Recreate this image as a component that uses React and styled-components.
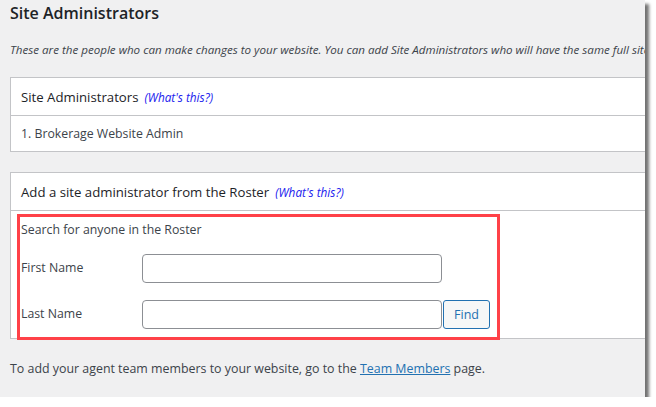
import React from 'react';
import styled, { createGlobalStyle } from 'styled-components';

const GlobalStyle = createGlobalStyle`
    html, body {
        margin: 0;
        padding: 0;
        background: #ffffff;
    }

    body {
        font-family: 'Open Sans', 'Noto Sans', sans-serif;
        color: #3c434a;
    }
`;

const Frame = styled.div`
    width: 645px;
    height: 397px;
    overflow: hidden;
    background: #f0f0f1;
    box-shadow: 4px 4px 3px rgba(0, 0, 0, 0.55);
`;

const Page = styled.div`
    width: 760px;
    padding-left: 10px;
`;

const Title = styled.h1`
    margin: 0;
    height: 28px;
    line-height: 27px;
    font-size: 16px;
    font-weight: 600;
    color: #1d2327;
`;

const Intro = styled.p`
    margin: 12px 0 0;
    height: 18px;
    line-height: 19px;
    font-size: 11.6px;
    font-style: italic;
    white-space: nowrap;
`;

const Box = styled.section`
    margin-top: ${props => props.gap}px;
    background: #ffffff;
    border: 1px solid #c3c4c7;
`;

const BoxHead = styled.div`
    height: 37px;
    display: flex;
    align-items: center;
    gap: 6px;
    padding-left: 10px;
    font-size: 13.2px;
    color: #1d2327;
    border-bottom: 1px solid #c3c4c7;
`;

const Help = styled.a`
    font-size: 11.8px;
    font-style: italic;
    color: #1a1aee;
    text-decoration: none;
`;

const Row = styled.div`
    height: 35px;
    display: flex;
    align-items: center;
    padding-left: 10px;
    font-size: 12.3px;
`;

const Roster = styled.form`
    width: 476px;
    margin: 3px 0 -2px 6px;
    padding: 3px 0 8px 1px;
    border: 3px solid #ff4148;
`;

const Lead = styled.div`
    height: 20px;
    line-height: 20px;
    font-size: 12.3px;
`;

const Field = styled.div`
    display: flex;
    align-items: center;
    margin-top: ${props => (props.first ? 14 : 17)}px;
`;

const Label = styled.label`
    width: 121px;
    font-size: 12.3px;
    padding-bottom: 2px;
`;

const Input = styled.input`
    box-sizing: border-box;
    width: 300px;
    height: 29px;
    margin: 0;
    border: 1px solid #8c8f94;
    border-radius: 4px;
    background: #ffffff;
`;

const Find = styled.button`
    box-sizing: border-box;
    height: 29px;
    width: 47px;
    margin-left: 1px;
    padding: 0;
    border: 1px solid #2271b1;
    border-radius: 3px;
    background: #f6f7f7;
    color: #2271b1;
    font-family: inherit;
    font-size: 12.5px;
`;

const Note = styled.p`
    margin: 20px 0 0;
    height: 20px;
    line-height: 20px;
    font-size: 12.4px;

    a {
        color: #2271b1;
        text-decoration: underline;
    }
`;

const App = () => (
    <Frame>
        <GlobalStyle />
        <Page>
            <Title>Site Administrators</Title>
            <Intro>
                These are the people who can make changes to your website. You can add Site
                Administrators who will have the same full site access as you.
            </Intro>
            <Box gap={19}>
                <BoxHead>
                    Site Administrators <Help href="#">(What's this?)</Help>
                </BoxHead>
                <Row>1. Brokerage Website Admin</Row>
            </Box>
            <Box gap={20}>
                <BoxHead>
                    Add a site administrator from the Roster <Help href="#">(What's this?)</Help>
                </BoxHead>
                <Roster onSubmit={e => e.preventDefault()}>
                    <Lead>Search for anyone in the Roster</Lead>
                    <Field first>
                        <Label>First Name</Label>
                        <Input type="text" />
                    </Field>
                    <Field>
                        <Label>Last Name</Label>
                        <Input type="text" />
                        <Find type="submit">Find</Find>
                    </Field>
                </Roster>
            </Box>
            <Note>
                To add your agent team members to your website, go to the <a href="#">Team Members</a> page.
            </Note>
        </Page>
    </Frame>
);

export default App;
